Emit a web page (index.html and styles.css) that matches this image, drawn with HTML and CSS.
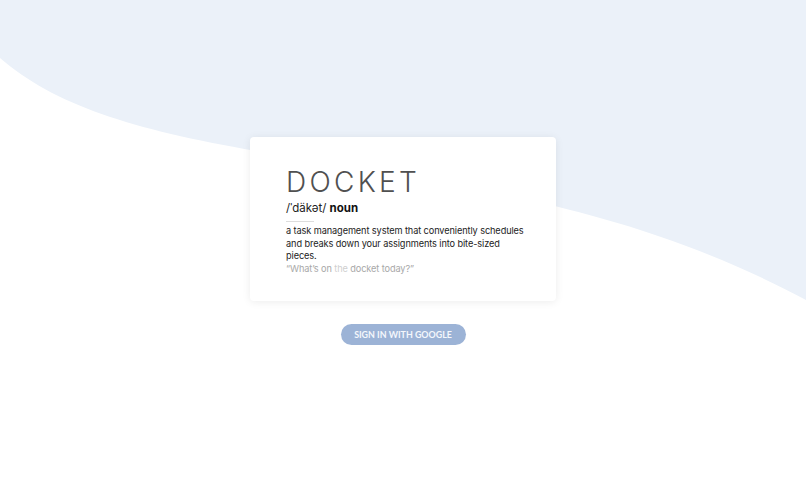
FILE: index.html
```html
<!DOCTYPE html>
<html>
<head>
<meta charset="utf-8">
<link rel="stylesheet" href="styles.css">
</head>
<body>
<svg class="wave" viewBox="0 0 806 504" preserveAspectRatio="none" aria-hidden="true">
  <path d="M0 58 C 60 110, 150 135, 300 158 C 420 178, 520 195, 600 218 C 680 240, 750 270, 806 300 V0 H0 Z" fill="#ebf1f9"/>
</svg>
<main class="page">
  <section class="card">
    <h1 class="title">DOCKET</h1>
    <p class="pron">/ˈdäkət/ <b>noun</b></p>
    <hr class="divider">
    <p class="def">a task management system that conveniently schedules and breaks down your assignments into bite-sized pieces.</p>
    <p class="quote">“What’s on <span class="the">the</span> docket today?”</p>
  </section>
  <button class="signin">SIGN IN WITH GOOGLE</button>
</main>
</body>
</html>
```
FILE: styles.css
```css
html, body {
  margin: 0;
  padding: 0;
  height: 100%;
  background: #ffffff;
  font-family: "Inter", "Lato", "Liberation Sans", sans-serif;
  overflow: hidden;
}
.wave {
  position: absolute;
  left: 0;
  top: 0;
  width: 806px;
  height: 504px;
  z-index: 0;
}
.page {
  position: relative;
  z-index: 1;
  display: flex;
  flex-direction: column;
  align-items: center;
  padding-top: 137px;
}
.card {
  width: 306px;
  height: 164px;
  box-sizing: border-box;
  background: #fff;
  border-radius: 4px;
  box-shadow: 0 1px 8px rgba(0, 0, 0, 0.08);
  padding: 28px 32px 0 36px;
}
.title {
  margin: 0;
  font-weight: 300;
  font-size: 28px;
  letter-spacing: 3.3px;
  line-height: 34px;
  color: #505050;
}
.pron {
  margin: 1px 0 0 0;
  font-size: 11.5px;
  line-height: 16px;
  color: #222;
}
.pron b {
  font-weight: 700;
  color: #111;
}
.divider {
  width: 28px;
  margin: 5px 0 3px 0;
  border: 0;
  border-top: 1px solid #dddddd;
  height: 0;
}
.def {
  margin: 0;
  font-size: 9.2px;
  letter-spacing: -0.1px;
  line-height: 12.5px;
  color: #222;
}
.quote {
  margin: 0;
  font-size: 9.2px;
  letter-spacing: -0.1px;
  line-height: 12.5px;
  color: #a8a8a8;
}
.quote .the {
  color: #cfcfcf;
}
.signin {
  margin-top: 23px;
  width: 125px;
  height: 21px;
  border: 0;
  border-radius: 11px;
  background: #9cb3d6;
  color: #f4f7fc;
  font-family: "Lato", "Inter", "Liberation Sans", sans-serif;
  font-weight: 700;
  font-size: 8.9px;
  padding: 0;
  cursor: pointer;
}
```
